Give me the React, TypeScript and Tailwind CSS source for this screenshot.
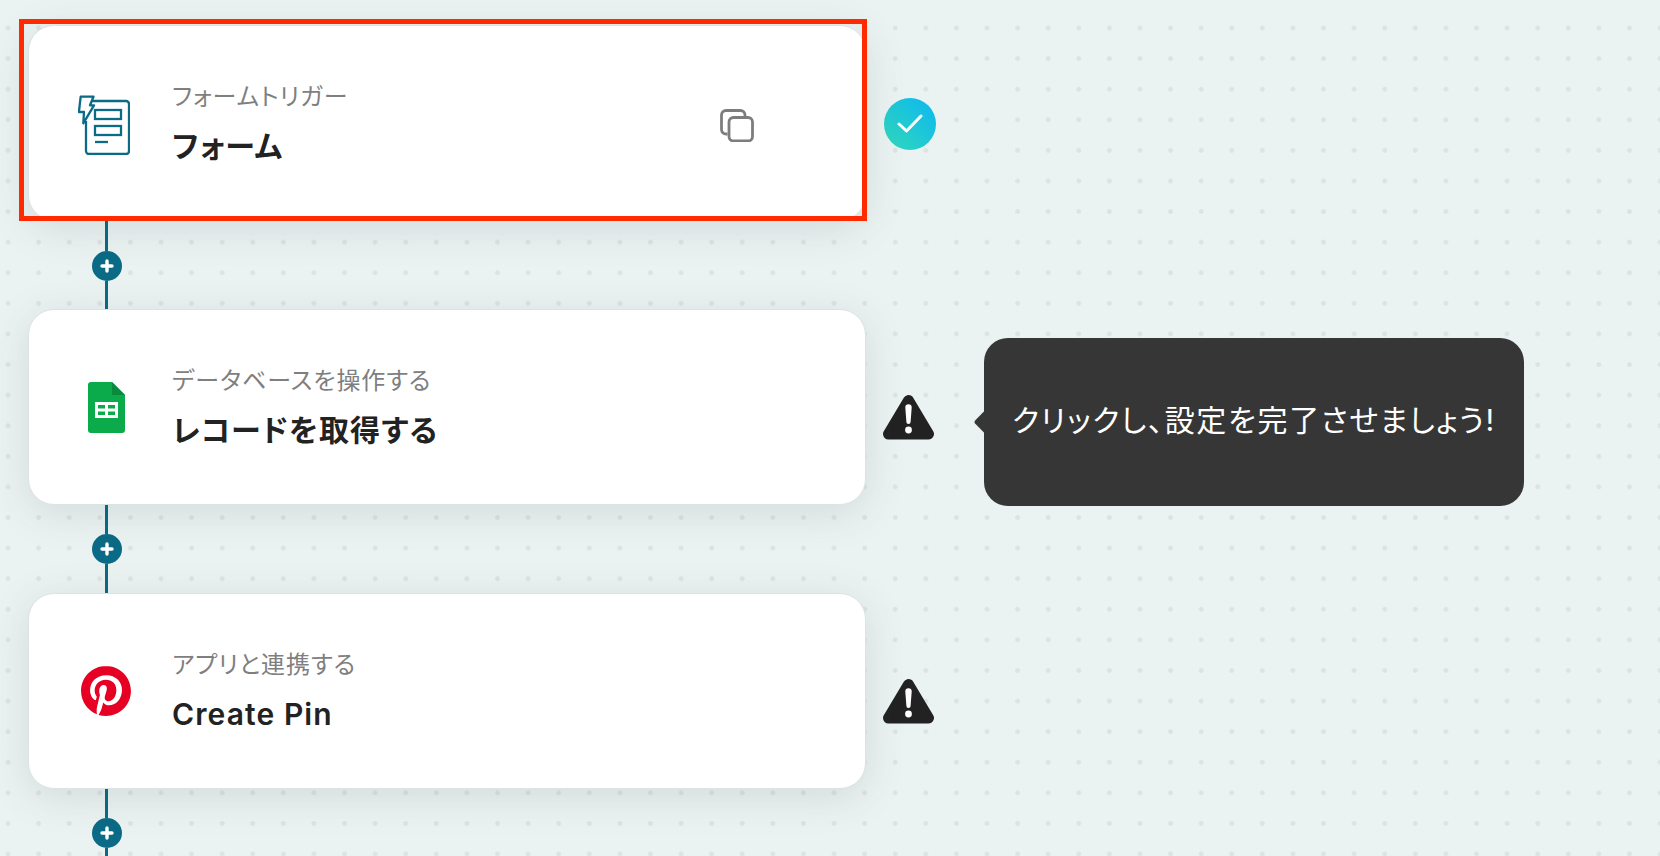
import React from "react";
import { SiPinterest } from "react-icons/si";

const FONT = "[font-family:Inter,'Noto_Sans_CJK_JP',sans-serif]";

function FormIcon() {
  return (
    <svg width="52" height="60" viewBox="0 0 52 60" fill="none" stroke="#0b6a85" strokeWidth="2.3" className="ml-[-4px] mt-[3px]">
      <path d="M11 6 H48 a3 3 0 0 1 3 3 V56 a3 3 0 0 1 -3 3 H11 a3 3 0 0 1 -3 -3 V26" strokeLinejoin="round" />
      <path d="M2.7 1.7 H15.5 L12 10.3 H16 L5.3 28.3 L6 17 H0.9 Z" fill="#fff" strokeLinejoin="round" />
      <rect x="17" y="15" width="26" height="9" />
      <rect x="17" y="31" width="26" height="9" />
      <path d="M17 47 H30" />
    </svg>
  );
}

function SheetsIcon() {
  return (
    <svg width="37" height="51" viewBox="0 0 37 51" className="mt-[2px]">
      <path d="M3 0 H24 L37 13 V48 a3 3 0 0 1 -3 3 H3 a3 3 0 0 1 -3 -3 V3 a3 3 0 0 1 3 -3 Z" fill="#0bab4b" />
      <path d="M24 0 L37 13 H24 Z" fill="#0a8a3d" />
      <path d="M7 20 H30 V36 H7 Z M10 23 V26.5 H17 V23 Z M20 23 V26.5 H27 V23 Z M10 29.5 V33 H17 V29.5 Z M20 29.5 V33 H27 V29.5 Z" fill="#fff" fillRule="evenodd" />
    </svg>
  );
}

function CopyIcon() {
  return (
    <svg width="34" height="33" viewBox="0 0 34 33" fill="none" stroke="#7d7d7d" strokeWidth="2.8">
      <path d="M7.5 25 H6 a4.5 4.5 0 0 1 -4.5 -4.5 V6 A4.5 4.5 0 0 1 6 1.5 H20.5 A4.5 4.5 0 0 1 25 6 V8" />
      <rect x="9" y="8.5" width="23.5" height="23.5" rx="4.5" />
    </svg>
  );
}

function CheckBadge() {
  return (
    <div className="mt-[2px] flex h-[52px] w-[52px] shrink-0 items-center justify-center rounded-full bg-gradient-to-tr from-[#33d9b8] to-[#0db6f0]">
      <svg width="26" height="20" viewBox="0 0 26 20" fill="none" stroke="#fff" strokeWidth="3" strokeLinecap="round" strokeLinejoin="round">
        <path d="M2 10 L9.5 17 L24 2" />
      </svg>
    </div>
  );
}

function WarnIcon() {
  return (
    <svg width="51" height="46" viewBox="0 0 51 46" className="mt-[21px] shrink-0">
      <path d="M25.5 6.5 L45.5 40 H5.5 Z" fill="#222" stroke="#222" strokeWidth="11" strokeLinejoin="round" />
      <path d="M22.3 13.5 a3.2 3.2 0 0 1 6.4 0 L27.6 28 a2.1 2.1 0 0 1 -4.2 0 Z" fill="#fff" />
      <circle cx="25.5" cy="36" r="3.4" fill="#fff" />
    </svg>
  );
}

function Connector() {
  return (
    <div className="ml-[63.5px] flex w-[30px] flex-col items-center">
      <div className="h-[29.5px] w-[3px] bg-[#0b6a85]" />
      <div className="flex h-[30px] w-[30px] items-center justify-center rounded-full bg-[#0b6a85]">
        <svg width="14" height="14" viewBox="0 0 14 14" stroke="#fff" strokeWidth="3.4" strokeLinecap="round">
          <path d="M7 2 V12 M2 7 H12" />
        </svg>
      </div>
      <div className="h-[28.3px] w-[3px] bg-[#0b6a85]" />
    </div>
  );
}

function Card({
  icon,
  label,
  title,
  extra,
}: {
  icon: React.ReactNode;
  label: string;
  title: string;
  extra?: React.ReactNode;
}) {
  return (
    <div className="relative z-0 flex h-[196px] w-[838px] shrink-0 items-center rounded-[26px] border border-[#dde3e3] bg-white shadow-[0_8px_40px_rgba(40,70,70,0.13)]">
      <div className="ml-[47px] mr-[36px] flex h-[60px] w-[60px] shrink-0 items-center justify-center">{icon}</div>
      <div className="flex flex-col gap-[14px] pb-[2px] [font-feature-settings:'palt']">
        <div className="text-[24px] leading-[34px] tracking-[0.96px] text-[#7f7f7f]">{label}</div>
        <div className="text-[30px] font-semibold leading-[36px] tracking-[1.1px] text-[#222222]">{title}</div>
      </div>
      {extra}
    </div>
  );
}

export default function App() {
  return (
    <div
      className={`${FONT} relative h-[856px] w-[1660px] overflow-hidden bg-[#ebf3f2] bg-[radial-gradient(circle,#dde3e3_2.1px,transparent_2.6px)] bg-[length:30.6px_30.6px] bg-[position:-7.3px_12.7px] pl-[28px] pt-[25px]`}
    >
      <div className="relative flex items-center gap-[18px]">
        <Card
          icon={<FormIcon />}
          label="フォームトリガー"
          title="フォーム"
          extra={
            <div className="ml-auto mr-[111px] mt-[5px]">
              <CopyIcon />
            </div>
          }
        />
        <CheckBadge />
        <div className="absolute left-[-9px] top-[-6px] z-10 h-[202px] w-[848px] border-[5px] border-[#ff2a00]" />
      </div>
      <Connector />
      <div className="relative flex items-center gap-[17px]">
        <Card icon={<SheetsIcon />} label="データベースを操作する" title="レコードを取得する" />
        <WarnIcon />
        <div className="absolute left-[956px] top-[29px] flex h-[168px] w-[540px] items-center justify-center rounded-[24px] bg-[#363636] pb-[3px] text-[30px] tracking-[1.7px] text-white [font-feature-settings:'palt']">
          <div className="absolute left-[-6.5px] top-[73px] h-[22px] w-[22px] rotate-45 rounded-[3px] bg-[#363636]" />
          <span className="relative">クリックし、設定を完了させましょう!</span>
        </div>
      </div>
      <Connector />
      <div className="relative flex items-center gap-[17px]">
        <Card icon={<SiPinterest size={50} color="#e60023" />} label="アプリと連携する" title="Create Pin" />
        <WarnIcon />
      </div>
      <Connector />
    </div>
  );
}
